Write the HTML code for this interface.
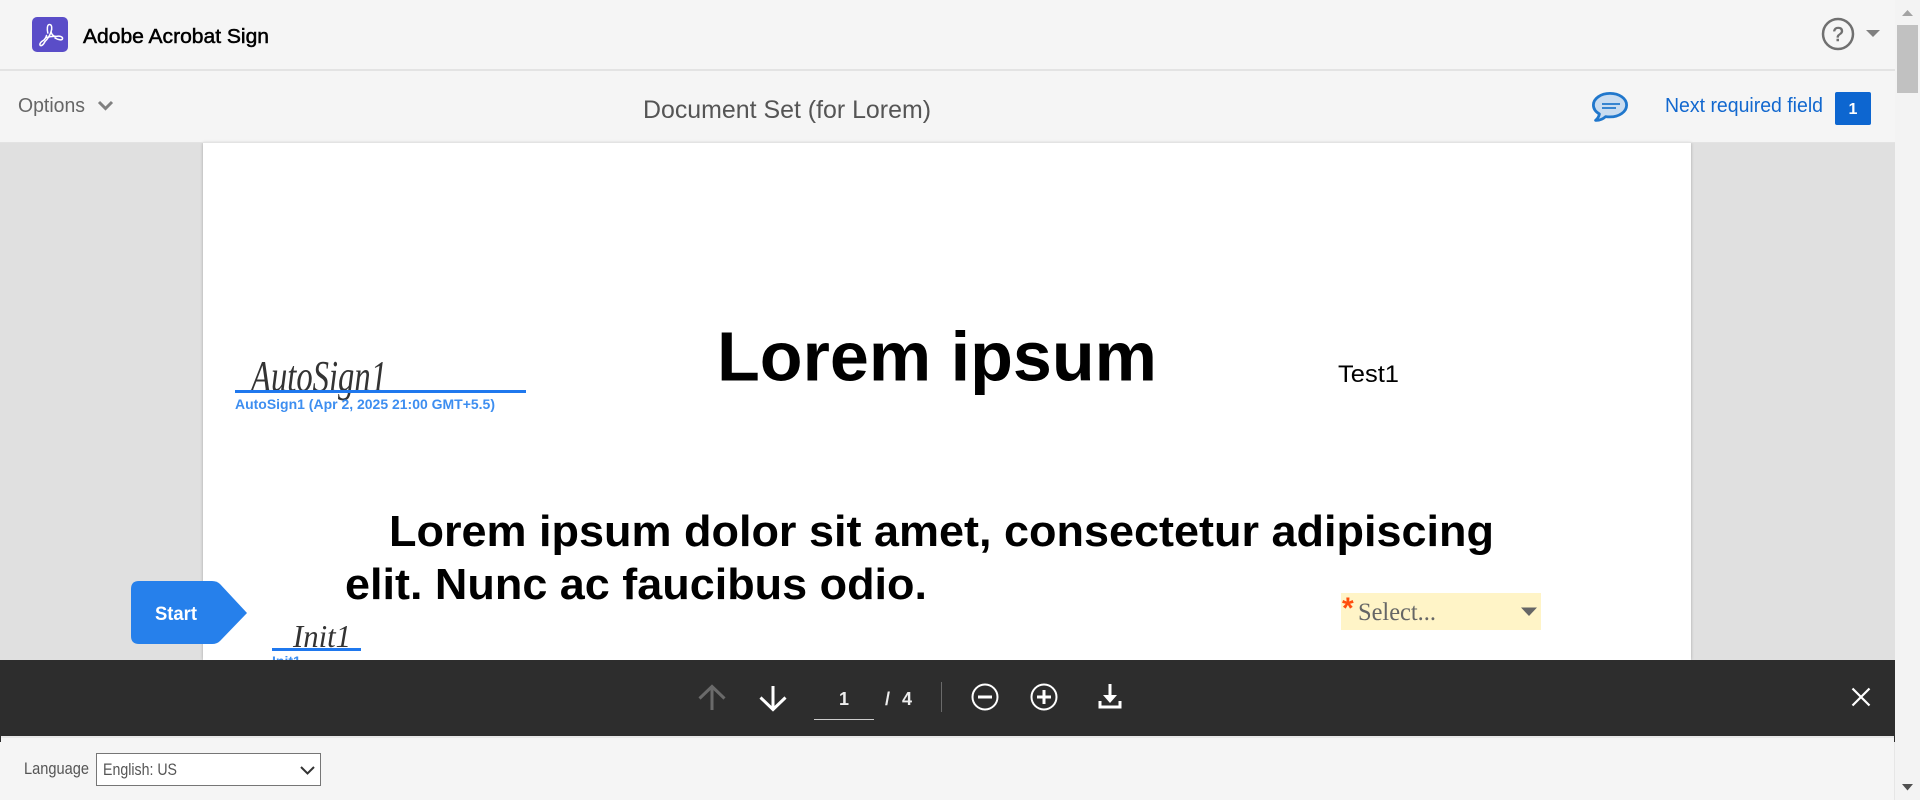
<!DOCTYPE html>
<html lang="en">
<head>
<meta charset="utf-8">
<title>Adobe Acrobat Sign</title>
<style>
html,body{margin:0;padding:0;width:1920px;height:800px;overflow:hidden;background:#f5f5f5;font-family:"Liberation Sans",sans-serif}
.p{position:absolute}
svg{position:absolute;left:0;top:0}
text{font-family:"Liberation Sans",sans-serif}
</style>
</head>
<body>
<div class="p" style="left:0;top:0;width:1895px;height:71px;background:#f5f5f5;border-bottom:2px solid #e3e3e3;box-sizing:border-box"></div>
<div class="p" style="left:0;top:71px;width:1895px;height:72px;background:#f5f5f5"></div>
<div class="p" style="left:0;top:142px;width:1895px;height:518px;background:#e0e0e0"></div>
<div class="p" style="left:203px;top:143px;width:1488px;height:517px;background:#fff;box-shadow:0 0 3px rgba(0,0,0,.25)"></div>
<div class="p" style="left:0;top:142px;width:1895px;height:1px;background:#e3e3e3"></div>
<div class="p" style="left:0;top:660px;width:1895px;height:76px;background:#2d2d2d"></div>
<div class="p" style="left:0;top:736px;width:1895px;height:64px;background:#f5f5f5;border-top:2px solid #e8e8e8;box-sizing:border-box"></div>
<div class="p" style="left:0;top:736px;width:1px;height:6px;background:#2d2d2d"></div>
<div class="p" style="left:1894px;top:736px;width:1px;height:6px;background:#2d2d2d"></div>
<div class="p" style="left:1894px;top:742px;width:1px;height:58px;background:#e6e6e6"></div>
<div class="p" style="left:1895px;top:0;width:25px;height:800px;background:#f3f3f3"></div>
<div class="p" style="left:1897px;top:25px;width:21px;height:68px;background:#c1c1c1"></div>
<div class="p" style="left:96px;top:753px;width:225px;height:33px;background:#fff;border:1px solid #767676;box-sizing:border-box"></div>
<div class="p" style="left:1341px;top:593px;width:200px;height:37px;background:#fff4c7"></div>

<svg width="1920" height="800" viewBox="0 0 1920 800">
  <!-- scrollbar arrows -->
  <path d="M1902 16l5.500-6 5.500 6z" fill="#a3a3a3"/>
  <path d="M1902 784h11l-5.500 6.500z" fill="#505050"/>

  <!-- logo -->
  <rect x="32" y="17" width="36" height="35" rx="5" fill="#5a4dc8"/>
  <g fill="none" stroke="#fff" stroke-width="1.500" stroke-linecap="round">
    <path d="M47.800 33C47 29 47 24.500 49.500 24.500 52 24.500 52.300 28.500 51 32 50 35 48 38.500 45 41.500"/>
    <path d="M51 32C52 35 53.500 36.500 56 36.500"/>
    <path d="M46.500 35.500C46 37.500 44.500 40 43 40.700 41 41.700 39.500 43.500 40 45 40.700 46.500 43 45.500 45 41.500"/>
    <path d="M46.500 37.500C50 36.500 53 36 56 36.500 60 35.500 63 37 62.500 38.800 62 40.500 58.500 40 55 38"/>
  </g>
  <text x="83" y="43" font-size="20" fill="#000" stroke="#000" stroke-width=".5" textLength="186" lengthAdjust="spacingAndGlyphs">Adobe Acrobat Sign</text>

  <!-- help -->
  <circle cx="1838" cy="34" r="15" fill="none" stroke="#707070" stroke-width="2.500"/>
  <text x="1838" y="41" font-size="20" fill="#707070" stroke="#707070" stroke-width=".6" text-anchor="middle">?</text>
  <path d="M1866 30h14l-7 7z" fill="#808080"/>

  <!-- sub bar -->
  <text x="18" y="112" font-size="20" fill="#666" textLength="67" lengthAdjust="spacingAndGlyphs">Options</text>
  <path d="M99 102l6.500 6.500 6.500-6.500" fill="none" stroke="#808080" stroke-width="3"/>
  <text x="643" y="118" font-size="25" fill="#555" textLength="288" lengthAdjust="spacingAndGlyphs">Document Set (for Lorem)</text>
  <path d="M1610 93.400c-9.200 0-16.600 5.200-16.600 11.600 0 3.700 2.400 6.900 6 9-.5 2.500-2 4.800-3.800 6.300 3.700.2 7.400-1.300 10-3.700 1.400.2 2.900.3 4.400.3 9.200 0 16.600-5.200 16.600-11.800s-7.400-11.700-16.600-11.700z" fill="#c9dcf0" stroke="#2077cc" stroke-width="2.800" stroke-linejoin="round"/>
  <path d="M1602 104h18M1602 108h14" stroke="#2077cc" stroke-width="1.800" fill="none"/>
  <text x="1665" y="112" font-size="20" fill="#1268cf" textLength="158" lengthAdjust="spacingAndGlyphs">Next required field</text>
  <rect x="1835" y="92" width="36" height="33" rx="2" fill="#0d66d0"/>
  <text x="1853" y="114" font-size="16" font-weight="bold" fill="#fff" text-anchor="middle">1</text>

  <!-- document -->
  <text x="717" y="380.500" font-size="70" font-weight="bold" fill="#000" textLength="440" lengthAdjust="spacingAndGlyphs">Lorem ipsum</text>
  <text x="1338" y="382" font-size="24.500" fill="#000" textLength="61" lengthAdjust="spacingAndGlyphs">Test1</text>
  <text x="389" y="546" font-size="44" font-weight="bold" fill="#000" textLength="1105" lengthAdjust="spacingAndGlyphs">Lorem ipsum dolor sit amet, consectetur adipiscing</text>
  <text x="345" y="599" font-size="44" font-weight="bold" fill="#000" textLength="582" lengthAdjust="spacingAndGlyphs">elit. Nunc ac faucibus odio.</text>

  <!-- signature -->
  <text x="251" y="391" font-size="44" font-style="italic" style="font-family:'Liberation Serif',serif" fill="#333" textLength="136" lengthAdjust="spacingAndGlyphs">AutoSign1</text>
  <rect x="235" y="390" width="291" height="3" fill="#1f78ee"/>
  <text x="235" y="409" font-size="14" font-weight="bold" fill="#3d8ef0" textLength="260" lengthAdjust="spacingAndGlyphs">AutoSign1 (Apr 2, 2025 21:00 GMT+5.5)</text>

  <!-- initials -->
  <text x="293" y="647" font-size="32" font-style="italic" style="font-family:'Liberation Serif',serif" fill="#333" textLength="58" lengthAdjust="spacingAndGlyphs">Init1</text>
  <rect x="272" y="648" width="89" height="3" fill="#1f78ee"/>
  <svg x="260" y="652" width="60" height="8"><text x="12" y="14" font-size="14" font-weight="bold" fill="#3d8ef0">Init1</text></svg>

  <!-- start -->
  <path d="M139 581h73q5 0 8 3l27 29-27 28q-3 3-8 3h-73q-8 0-8-8v-47q0-8 8-8z" fill="#2680eb"/>
  <text x="155" y="620" font-size="19" font-weight="bold" fill="#fff" textLength="42" lengthAdjust="spacingAndGlyphs">Start</text>

  <!-- select field -->
  <text x="1342" y="618" font-size="30" font-weight="bold" fill="#ff4d0d">*</text>
  <text x="1358" y="620" font-size="25" fill="#666" style="font-family:'Liberation Serif',serif" textLength="78" lengthAdjust="spacingAndGlyphs">Select...</text>
  <path d="M1521 607.500h16l-8 8.500z" fill="#666"/>

  <!-- toolbar -->
  <path d="M712 710v-23M699.500 698.500L712 686.500l12.500 12" fill="none" stroke="#6a6a6a" stroke-width="3"/>
  <path d="M773 686v23M760.500 697.500L773 709.500l12.500-12" fill="none" stroke="#fff" stroke-width="3"/>
  <text x="844" y="705" font-size="18" font-weight="bold" fill="#eee" text-anchor="middle">1</text>
  <rect x="814" y="719" width="60" height="1" fill="#ccc"/>
  <text x="885" y="705" font-size="18" font-weight="bold" fill="#eee" textLength="27" lengthAdjust="spacing">/ 4</text>
  <rect x="941" y="682" width="1" height="30" fill="#6a6a6a"/>
  <circle cx="985" cy="697" r="12.500" fill="none" stroke="#fff" stroke-width="2"/>
  <path d="M978 697h14" stroke="#fff" stroke-width="3"/>
  <circle cx="1044" cy="697" r="12.500" fill="none" stroke="#fff" stroke-width="2"/>
  <path d="M1037 697h14M1044 690v14" stroke="#fff" stroke-width="3"/>
  <path d="M1110 684v16" stroke="#fff" stroke-width="3"/>
  <path d="M1103 695h14l-7 8z" fill="#fff"/>
  <path d="M1100 701v6h20v-6" fill="none" stroke="#fff" stroke-width="3"/>
  <path d="M1852.500 688.500l17 17M1869.500 688.500l-17 17" stroke="#fff" stroke-width="2.200"/>

  <!-- footer -->
  <text x="24" y="774" font-size="16.500" fill="#555" textLength="65" lengthAdjust="spacingAndGlyphs">Language</text>
  <text x="103" y="775" font-size="17" fill="#555" textLength="74" lengthAdjust="spacingAndGlyphs">English: US</text>
  <path d="M301 767l6.500 6.500 6.500-6.500" fill="none" stroke="#333" stroke-width="2"/>
</svg>
</body>
</html>
